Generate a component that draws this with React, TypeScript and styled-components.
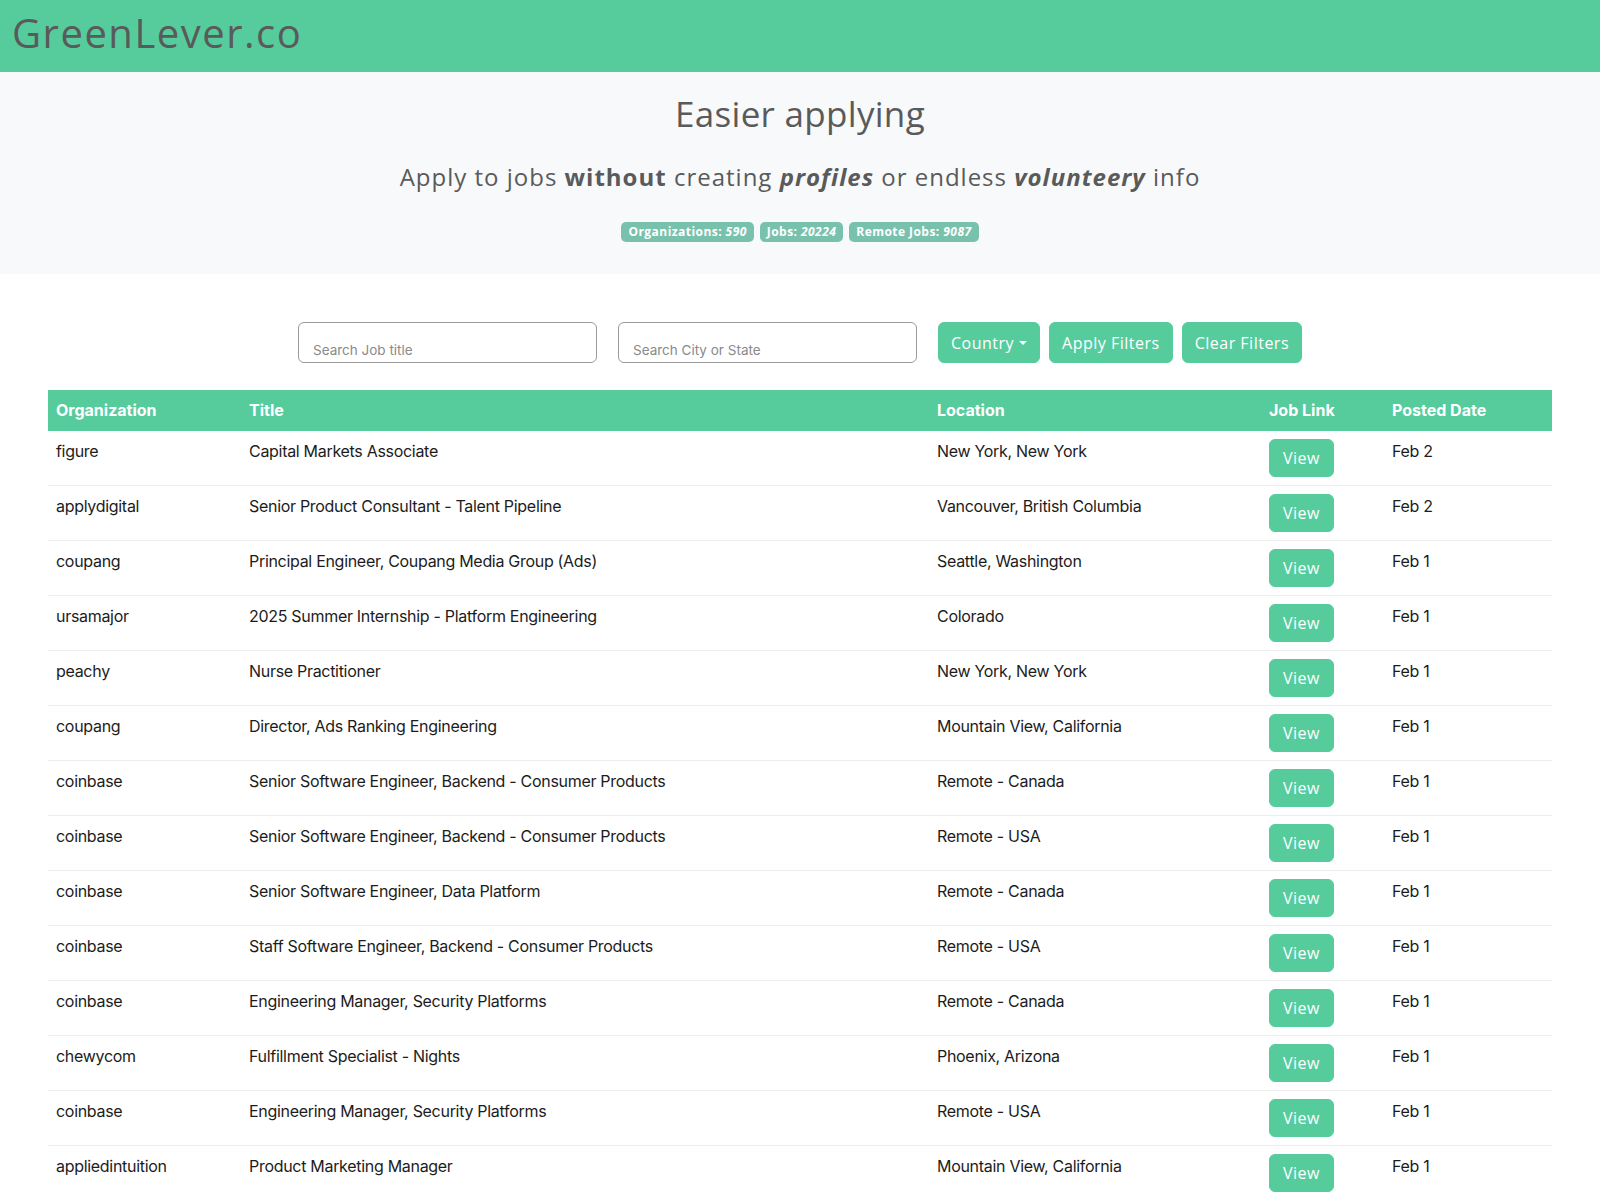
import React from "react";
import styled, { createGlobalStyle } from "styled-components";

const GlobalStyle = createGlobalStyle`
  body {
    margin: 0;
    background: #fff;
    font-family: Inter, "Liberation Sans", sans-serif;
    color: #1c1c1c;
  }
`;

const HEADING_FONT = `"Open Sans", "DejaVu Sans", sans-serif`;

const Navbar = styled.nav`
  height: 72px;
  background: #56cc9d;
  display: flex;
  align-items: center;
  padding: 0 12px;
  box-sizing: border-box;
`;

const Brand = styled.a`
  font-family: ${HEADING_FONT};
  font-size: 40px;
  color: #5a5a5a;
  text-decoration: none;
  letter-spacing: 1.5px;
  margin-top: -8px;
`;

const Hero = styled.header`
  background: #f8f9fa;
  height: 202px;
  box-sizing: border-box;
  padding-top: 21px;
  display: flex;
  flex-direction: column;
  align-items: center;
  color: #5a5a5a;
  font-family: ${HEADING_FONT};
`;

const Title = styled.h1`
  margin: 0;
  font-size: 35px;
  font-weight: 400;
  line-height: 42px;
  letter-spacing: 0.3px;
`;

const Lead = styled.p`
  margin: 27px 0 0;
  font-size: 24px;
  line-height: 29px;
  font-weight: 400;
  letter-spacing: 1px;

  b,
  em {
    font-weight: 700;
  }
`;

const BadgeRow = styled.div`
  display: flex;
  gap: 6px;
  margin-top: 31px;
`;

const Badge = styled.span`
  background: #78c2ad;
  color: #fff;
  font-size: 12px;
  font-weight: 700;
  line-height: 20px;
  letter-spacing: 0.45px;
  padding: 0 7px;
  border-radius: 5px;

  i {
    font-style: italic;
  }
`;

const Filters = styled.div`
  display: flex;
  justify-content: center;
  align-items: center;
  margin: 48px 0 0;
`;

const SearchInput = styled.input`
  width: 299px;
  height: 41px;
  box-sizing: border-box;
  border: 1px solid #9a9a9a;
  border-radius: 6px;
  padding: 14px 14px 0;
  margin-right: 21px;
  font-family: Inter, "Liberation Sans", sans-serif;
  font-size: 13.5px;
  color: #5a5a5a;
  outline: none;

  &::placeholder {
    color: #8a8a8a;
  }
`;

const Button = styled.button<{ $small?: boolean }>`
  background: #56cc9d;
  border: 1px solid #56cc9d;
  border-radius: 6px;
  color: #fff;
  font-family: ${HEADING_FONT};
  font-size: 16px;
  letter-spacing: 0.5px;
  height: ${(p) => (p.$small ? "38px" : "41px")};
  padding: 0 ${(p) => (p.$small ? "13px" : "12px")};
  display: inline-flex;
  align-items: center;
  gap: 5px;
  cursor: pointer;
`;

const FilterButton = styled(Button)`
  & + & {
    margin-left: 9px;
  }
`;

const Caret = styled.span`
  width: 0;
  height: 0;
  border-left: 4px solid transparent;
  border-right: 4px solid transparent;
  border-top: 4px solid #fff;
  margin-top: 1px;
`;

const Table = styled.table`
  margin: 27px 48px 0;
  width: calc(100% - 96px);
  border-collapse: collapse;
  font-size: 16px;
  line-height: 24px;

  th {
    background: #56cc9d;
    color: #fff;
    font-weight: 700;
    text-align: left;
    padding: 8px;
    border-bottom: 1px solid #56cc9d;
  }

  td {
    padding: 8px;
    vertical-align: top;
    border-bottom: 1px solid #ececec;
    letter-spacing: -0.3px;
  }
`;

const Col = styled.col<{ $w: number }>`
  width: ${(p) => p.$w}px;
`;

const jobs = [
  ["figure", "Capital Markets Associate", "New York, New York", "Feb 2"],
  ["applydigital", "Senior Product Consultant - Talent Pipeline", "Vancouver, British Columbia", "Feb 2"],
  ["coupang", "Principal Engineer, Coupang Media Group (Ads)", "Seattle, Washington", "Feb 1"],
  ["ursamajor", "2025 Summer Internship - Platform Engineering", "Colorado", "Feb 1"],
  ["peachy", "Nurse Practitioner", "New York, New York", "Feb 1"],
  ["coupang", "Director, Ads Ranking Engineering", "Mountain View, California", "Feb 1"],
  ["coinbase", "Senior Software Engineer, Backend - Consumer Products", "Remote - Canada", "Feb 1"],
  ["coinbase", "Senior Software Engineer, Backend - Consumer Products", "Remote - USA", "Feb 1"],
  ["coinbase", "Senior Software Engineer, Data Platform", "Remote - Canada", "Feb 1"],
  ["coinbase", "Staff Software Engineer, Backend - Consumer Products", "Remote - USA", "Feb 1"],
  ["coinbase", "Engineering Manager, Security Platforms", "Remote - Canada", "Feb 1"],
  ["chewycom", "Fulfillment Specialist - Nights", "Phoenix, Arizona", "Feb 1"],
  ["coinbase", "Engineering Manager, Security Platforms", "Remote - USA", "Feb 1"],
  ["appliedintuition", "Product Marketing Manager", "Mountain View, California", "Feb 1"],
];

const App = () => {
  return (
    <>
      <GlobalStyle />
      <Navbar>
        <Brand href="#">GreenLever.co</Brand>
      </Navbar>
      <Hero>
        <Title>Easier applying</Title>
        <Lead>
          Apply to jobs <b>without</b> creating <em>profiles</em> or endless{" "}
          <em>volunteery</em> info
        </Lead>
        <BadgeRow>
          <Badge>
            Organizations: <i>590</i>
          </Badge>
          <Badge>
            Jobs: <i>20224</i>
          </Badge>
          <Badge>
            Remote Jobs: <i>9087</i>
          </Badge>
        </BadgeRow>
      </Hero>
      <Filters>
        <SearchInput placeholder="Search Job title" />
        <SearchInput placeholder="Search City or State" />
        <FilterButton>
          Country <Caret />
        </FilterButton>
        <FilterButton>Apply Filters</FilterButton>
        <FilterButton>Clear Filters</FilterButton>
      </Filters>
      <Table>
        <colgroup>
          <Col $w={193} />
          <Col $w={688} />
          <Col $w={332} />
          <Col $w={123} />
          <Col $w={168} />
        </colgroup>
        <thead>
          <tr>
            <th>Organization</th>
            <th>Title</th>
            <th>Location</th>
            <th>Job Link</th>
            <th>Posted Date</th>
          </tr>
        </thead>
        <tbody>
          {jobs.map((job, index) => (
            <tr key={index}>
              <td>{job[0]}</td>
              <td>{job[1]}</td>
              <td>{job[2]}</td>
              <td>
                <Button $small>View</Button>
              </td>
              <td>{job[3]}</td>
            </tr>
          ))}
        </tbody>
      </Table>
    </>
  );
};

export default App;
